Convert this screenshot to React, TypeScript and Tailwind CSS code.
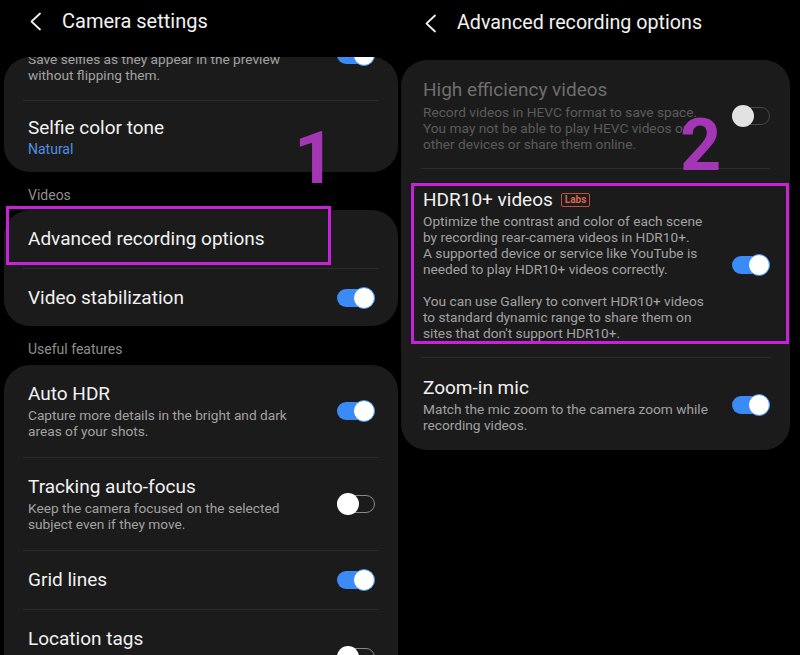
import React from 'react';

const Toggle = ({ on, dim }: { on: boolean; dim?: boolean }) => (
  <div className="relative flex h-[22px] w-[38px] shrink-0 items-center">
    {on ? (
      <div className="h-[18px] w-full rounded-full bg-[#3a8bf5]" />
    ) : (
      <div
        className={
          dim
            ? 'h-[18px] w-full rounded-full border-[1.5px] border-[#474747]'
            : 'h-[18px] w-full rounded-full border-[1.5px] border-[#8a8a8a]'
        }
      />
    )}
    <div
      className={
        on
          ? 'absolute right-0 top-0 h-[22px] w-[22px] rounded-full border-[1.5px] border-[#3a8bf5] bg-white'
          : dim
          ? 'absolute left-0 top-0 h-[22px] w-[22px] rounded-full bg-[#e2e2e2]'
          : 'absolute left-0 top-0 h-[22px] w-[22px] rounded-full bg-white'
      }
    />
  </div>
);

const Chevron = () => (
  <svg width="13" height="19" viewBox="0 0 13 19" fill="none">
    <polyline points="11,1.5 2.5,9.5 11,17.5" stroke="#eeeeee" strokeWidth="1.8" strokeLinecap="round" strokeLinejoin="round" />
  </svg>
);

const Divider = ({ right }: { right?: boolean }) => (
  <div className={right ? 'mx-[20px] h-px bg-[#2c2c2c]' : 'mx-[19px] h-px bg-[#2c2c2c]'} />
);

const Desc = ({ lines, dim }: { lines: string[]; dim?: boolean }) => (
  <div className={dim ? 'text-[13.7px] leading-[16px] text-[#5c5c5c]' : 'text-[13.7px] leading-[16px] text-[#a2a2a2]'}>
    {lines.map((l, i) => (
      <div key={i} className="h-[16px] whitespace-nowrap">
        {l}
      </div>
    ))}
  </div>
);

const Title = ({ children, dim }: { children: React.ReactNode; dim?: boolean }) => (
  <div className={dim ? 'text-[19px] leading-[22px] text-[#6e6e6e]' : 'text-[19px] leading-[22px] text-[#f1f1f1]'}>
    {children}
  </div>
);

export default function App() {
  return (
    <div className="relative flex h-[655px] w-[800px] overflow-hidden bg-black font-['Roboto',sans-serif]">
      {/* left: camera settings */}
      <div className="flex w-[400px] flex-col">
        <div className="flex h-[42px] shrink-0 items-center pl-[29px]">
          <Chevron />
          <span className="ml-[20px] text-[20px] text-[#f2f2f2]">Camera settings</span>
        </div>

        <div className="ml-[4px] mr-[2px] mt-[15px] h-[115px] shrink-0 overflow-hidden rounded-[26px] bg-[#1b1b1b]">
          <div className="-mt-[48px] flex items-center pb-[17px] pl-[24px] pr-[23px] pt-[18px]">
            <div className="flex-1">
              <div className="h-[24px]" />
              <Desc lines={['Save selfies as they appear in the preview', 'without flipping them.']} />
            </div>
            <Toggle on />
          </div>
          <Divider />
          <div className="pl-[24px] pt-[16px]">
            <Title>Selfie color tone</Title>
            <div className="mt-[1px] text-[14px] leading-[18px] text-[#4f8fe6]">Natural</div>
          </div>
        </div>

        <div className="pb-[6px] pl-[28px] pt-[14px] text-[14px] leading-[18px] text-[#8f8f8f]">Videos</div>

        <div className="relative ml-[4px] mr-[2px] shrink-0 rounded-[26px] bg-[#1b1b1b]">
          <div className="flex h-[58px] items-center pl-[24px] pr-[23px]">
            <Title>Advanced recording options</Title>
          </div>
          <Divider />
          <div className="flex h-[57px] items-center justify-between pl-[24px] pr-[23px]">
            <Title>Video stabilization</Title>
            <Toggle on />
          </div>
          <div className="absolute left-[2px] top-[-4px] h-[59px] w-[325px] border-[3px] border-[#c822d8]" />
        </div>

        <div className="pb-[7px] pl-[28px] pt-[14px] text-[14px] leading-[18px] text-[#8f8f8f]">Useful features</div>

        <div className="ml-[4px] mr-[2px] flex-1 overflow-hidden rounded-t-[26px] bg-[#1b1b1b]">
          <div className="flex items-center pb-[18px] pl-[24px] pr-[23px] pt-[18px]">
            <div className="flex-1">
              <Title>Auto HDR</Title>
              <div className="mt-[2px]">
                <Desc lines={['Capture more details in the bright and dark', 'areas of your shots.']} />
              </div>
            </div>
            <Toggle on />
          </div>
          <Divider />
          <div className="flex items-center pb-[18px] pl-[24px] pr-[23px] pt-[18px]">
            <div className="flex-1">
              <Title>Tracking auto-focus</Title>
              <div className="mt-[2px]">
                <Desc lines={['Keep the camera focused on the selected', 'subject even if they move.']} />
              </div>
            </div>
            <Toggle on={false} />
          </div>
          <Divider />
          <div className="flex h-[58px] items-center justify-between pl-[24px] pr-[23px]">
            <Title>Grid lines</Title>
            <Toggle on />
          </div>
          <Divider />
          <div className="flex items-center pb-[18px] pl-[24px] pr-[23px] pt-[18px]">
            <div className="flex-1">
              <Title>Location tags</Title>
              <div className="mt-[4px]">
                <Desc lines={['Add tags to your pictures and videos so', 'you can see where they were taken.']} />
              </div>
            </div>
            <Toggle on={false} />
          </div>
        </div>
      </div>

      {/* right: advanced recording options */}
      <div className="flex flex-1 flex-col">
        <div className="flex h-[46px] shrink-0 items-center pl-[24px]">
          <Chevron />
          <span className="ml-[20px] text-[19.7px] text-[#f2f2f2]">Advanced recording options</span>
        </div>

        <div className="ml-[1px] mr-[10px] mt-[14px] rounded-[26px] bg-[#1b1b1b]">
          <div className="flex items-center pb-[16px] pl-[22px] pr-[20px] pt-[19px]">
            <div className="flex-1">
              <Title dim>High efficiency videos</Title>
              <div className="mt-[3px]">
                <Desc
                  dim
                  lines={[
                    'Record videos in HEVC format to save space.',
                    'You may not be able to play HEVC videos on',
                    'other devices or share them online.',
                  ]}
                />
              </div>
            </div>
            <Toggle on={false} dim />
          </div>
          <Divider right />
          <div className="relative flex items-center pb-[16px] pl-[22px] pr-[20px] pt-[20px]">
            <div className="flex-1">
              <div className="flex items-center">
                <Title>HDR10+ videos</Title>
                <span className="ml-[8px] rounded-[2px] border border-[#b9523e] px-[3px] text-[10px] font-bold leading-[12px] text-[#d9664f]">
                  Labs
                </span>
              </div>
              <div className="mt-[2px]">
                <Desc
                  lines={[
                    'Optimize the contrast and color of each scene',
                    'by recording rear-camera videos in HDR10+.',
                    'A supported device or service like YouTube is',
                    'needed to play HDR10+ videos correctly.',
                    '',
                    'You can use Gallery to convert HDR10+ videos',
                    'to standard dynamic range to share them on',
                    "sites that don't support HDR10+.",
                  ]}
                />
              </div>
            </div>
            <Toggle on />
            <div className="absolute bottom-[13px] left-[10px] right-[1px] top-[14px] border-[3px] border-[#c822d8]" />
          </div>
          <Divider right />
          <div className="flex items-center pb-[17px] pl-[22px] pr-[20px] pt-[19px]">
            <div className="flex-1">
              <Title>Zoom-in mic</Title>
              <div className="mt-[2px]">
                <Desc lines={['Match the mic zoom to the camera zoom while', 'recording videos.']} />
              </div>
            </div>
            <Toggle on />
          </div>
        </div>
      </div>

      {/* step numbers */}
      <div className="absolute left-[294px] top-[123px] text-[72px] font-bold leading-none text-[#a336b4]">1</div>
      <div className="absolute left-[680px] top-[110px] text-[72px] font-bold leading-none text-[#a336b4]">2</div>
    </div>
  );
}
